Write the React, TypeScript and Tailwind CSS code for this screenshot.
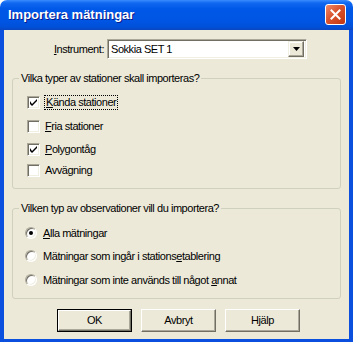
import React from "react";

const raised =
  "border border-t-white border-l-white border-r-[#716F64] border-b-[#716F64] shadow-[inset_-1px_-1px_0_#ACA899]";

const CheckBox = ({ checked }: { checked?: boolean }) => (
  <span className="w-[13px] h-[13px] shrink-0 bg-white border border-t-[#ACA899] border-l-[#ACA899] border-r-white border-b-white shadow-[inset_1px_1px_0_#716F64,inset_-1px_-1px_0_#F1EFE2] flex items-center justify-center">
    {checked && (
      <svg width="7" height="7" viewBox="0 0 7 7">
        <path d="M0 2v3l2 2l5-5V-0L2 5z" fill="#000" />
      </svg>
    )}
  </span>
);

const Radio = ({ checked }: { checked?: boolean }) => (
  <span className="relative w-[12px] h-[12px] shrink-0 rounded-full bg-white border border-t-[#ACA899] border-l-[#ACA899] border-r-white border-b-white shadow-[inset_1px_1px_0_#716F64,inset_-1px_-1px_0_#F1EFE2] flex items-center justify-center">
    {checked && <span className="w-[4px] h-[4px] rounded-full bg-black" />}
  </span>
);

const Group = ({
  title,
  className,
  children,
}: {
  title: string;
  className: string;
  children: React.ReactNode;
}) => (
  <div
    className={`relative mx-[8px] border border-[#D0D0BF] rounded-[3px] ${className}`}
  >
    <span className="absolute -top-[7px] left-[6px] bg-[#ECE9D8] px-[2px] leading-[13px]">
      {title}
    </span>
    {children}
  </div>
);

const Btn = ({ label, def }: { label: string; def?: boolean }) => (
  <div className={`w-[75px] h-[23px] ${def ? "border border-black" : ""}`}>
    <div
      className={`h-full flex items-center justify-center bg-[#ECE9D8] ${raised}`}
    >
      {label}
    </div>
  </div>
);

export default function App() {
  return (
    <div className="w-[353px] h-[342px] flex flex-col text-[11px] tracking-[-0.45px] text-black font-['Liberation_Sans',Arial,sans-serif] leading-[13px]">
      <div className="h-[30px] shrink-0 flex items-center justify-between pl-[8px] pr-[7px] rounded-t-[7px] bg-[linear-gradient(to_bottom,#3A8CFF_0%,#1068F0_10%,#0058E8_30%,#0055E3_70%,#0050D8_90%,#0A46C0_100%)]">
        <span className="text-white font-bold text-[13px] tracking-normal [text-shadow:1px_1px_0_#0A1A8A] -mt-[1px]">
          Importera mätningar
        </span>
        <span className="w-[21px] h-[21px] rounded-[3px] border border-white bg-[linear-gradient(135deg,#EE8A6A_0%,#D9532E_45%,#C2360F_100%)] flex items-center justify-center -mt-[1px]">
          <svg width="11" height="11" viewBox="0 0 11 11">
            <path d="M1.5 1.5l8 8M9.5 1.5l-8 8" stroke="#fff" strokeWidth="2" strokeLinecap="square" />
          </svg>
        </span>
      </div>
      <div className="flex-1 flex flex-col bg-[#ECE9D8] border-l-4 border-r-4 border-b-[3px] border-[#0A4FDD]">
        <div className="flex items-center mt-[9px] h-[20px]">
          <span className="w-[103px] text-right pr-[3px]">
            <span className="underline">I</span>nstrument:
          </span>
          <div className="w-[200px] h-[20px] bg-white border border-t-[#ACA899] border-l-[#ACA899] border-r-white border-b-white shadow-[inset_1px_1px_0_#716F64,inset_-1px_-1px_0_#F1EFE2] flex items-center justify-between pl-[3px] pr-[2px]">
            <span>Sokkia SET 1</span>
            <span className="w-[16px] h-[16px] bg-[#ECE9D8] flex items-center justify-center border border-t-[#F1EFE2] border-l-[#F1EFE2] border-r-[#716F64] border-b-[#716F64] shadow-[inset_-1px_-1px_0_#ACA899,inset_1px_1px_0_#fff]">
              <svg width="7" height="4" viewBox="0 0 7 4">
                <path d="M0 0h7L3.5 4z" fill="#000" />
              </svg>
            </span>
          </div>
        </div>

        <Group title="Vilka typer av stationer skall importeras?" className="mt-[19px] h-[111px] pt-[17px] pl-[14px]">
          <div className="flex items-center gap-[5px] h-[13px]">
            <CheckBox checked />
            <span className="outline outline-1 outline-dotted outline-black px-[1px]">
              <span className="underline">K</span>ända stationer
            </span>
          </div>
          <div className="flex items-center gap-[5px] h-[13px] mt-[11px]">
            <CheckBox />
            <span>
              <span className="underline">F</span>ria stationer
            </span>
          </div>
          <div className="flex items-center gap-[5px] h-[13px] mt-[10px]">
            <CheckBox checked />
            <span>
              <span className="underline">P</span>olygontåg
            </span>
          </div>
          <div className="flex items-center gap-[5px] h-[13px] mt-[8px]">
            <CheckBox />
            <span>Avvägning</span>
          </div>
        </Group>

        <Group title="Vilken typ av observationer vill du importera?" className="mt-[19px] h-[91px] pt-[18px] pl-[12px]">
          <div className="flex items-center gap-[6px] h-[12px]">
            <Radio checked />
            <span>
              <span className="underline">A</span>lla mätningar
            </span>
          </div>
          <div className="flex items-center gap-[6px] h-[12px] mt-[11px]">
            <Radio />
            <span>
              Mätningar som ingår i stations<span className="underline">e</span>tablering
            </span>
          </div>
          <div className="flex items-center gap-[6px] h-[12px] mt-[12px]">
            <Radio />
            <span>
              Mätningar som inte används till något <span className="underline">a</span>nnat
            </span>
          </div>
        </Group>

        <div className="flex gap-[9px] pl-[53px] mt-[10px]">
          <Btn label="OK" def />
          <Btn label="Avbryt" />
          <Btn label="Hjälp" />
        </div>
      </div>
    </div>
  );
}
